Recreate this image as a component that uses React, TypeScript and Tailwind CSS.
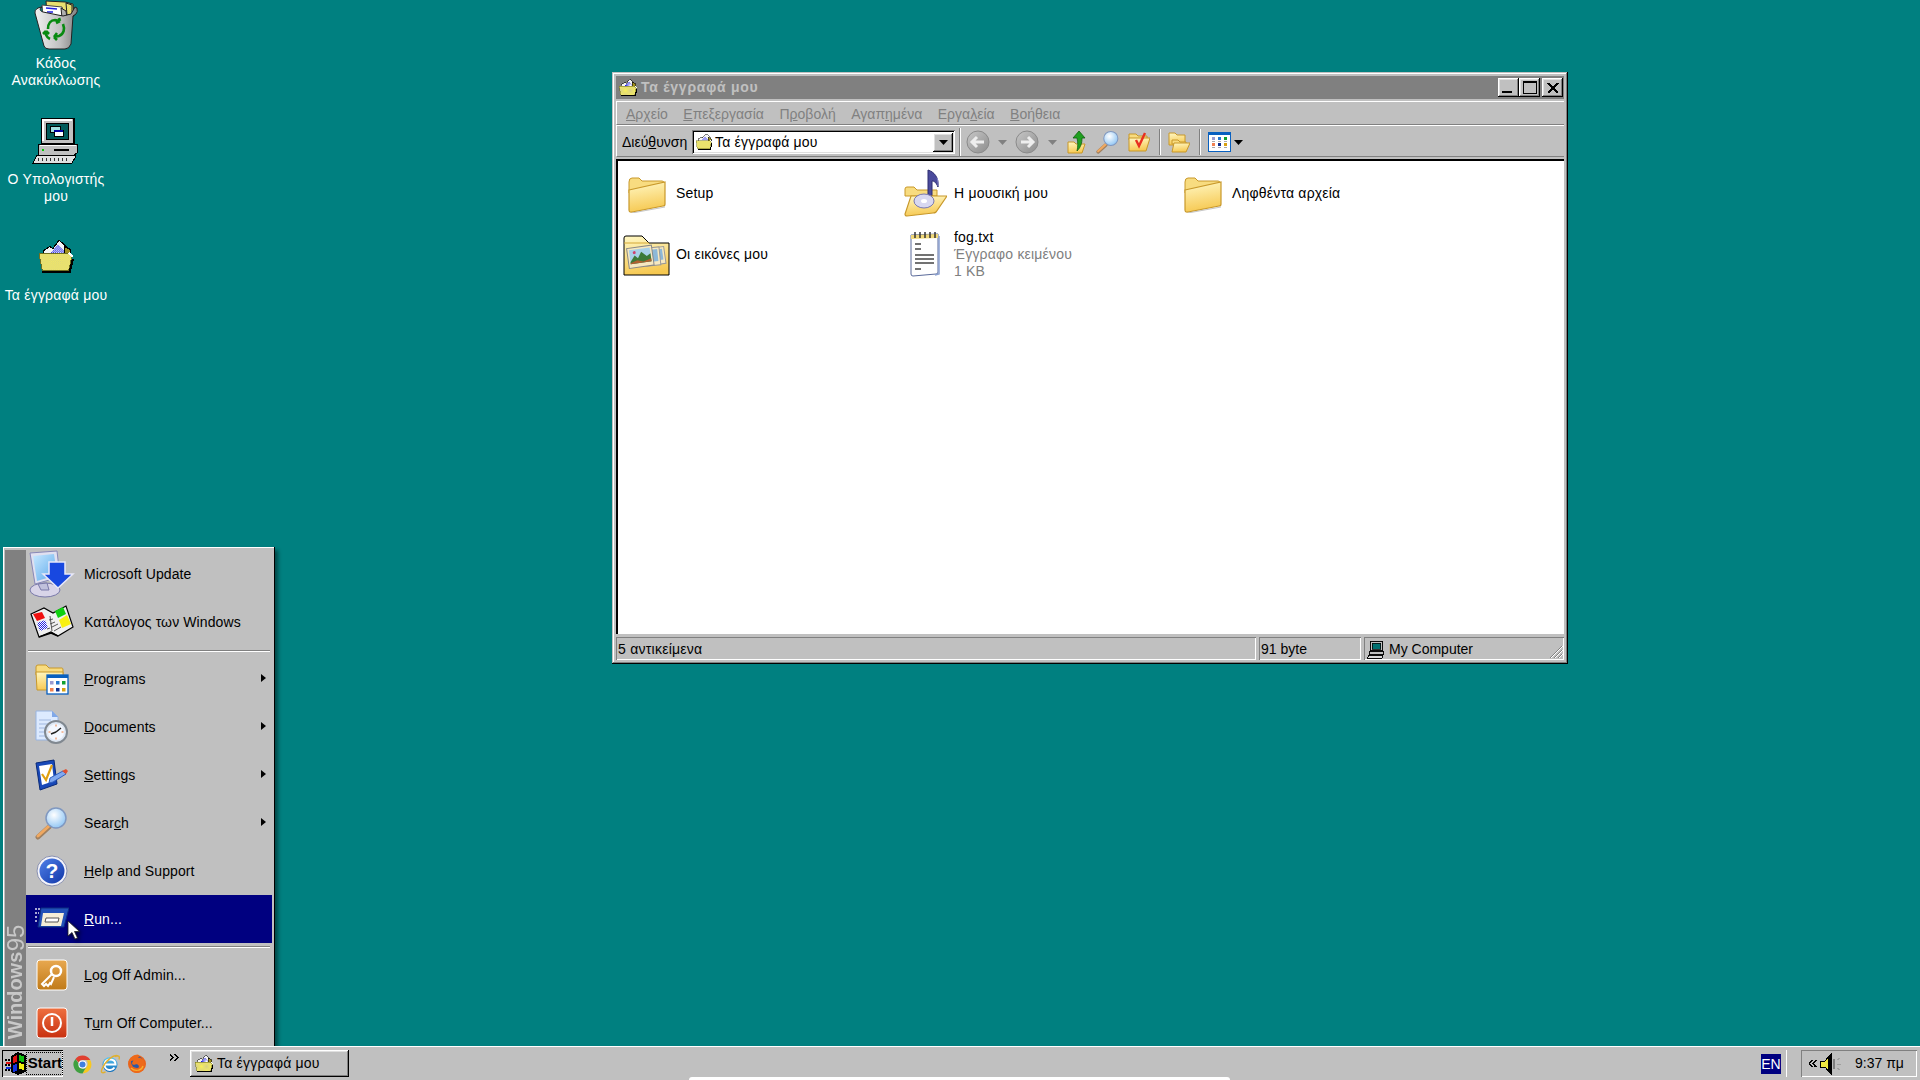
import React from "react";

const raised = "shadow-[inset_-1px_-1px_0_#000,inset_1px_1px_0_#fff,inset_-2px_-2px_0_#808080,inset_2px_2px_0_#dfdfdf]";
const sunkenThin = "shadow-[inset_1px_1px_0_#808080,inset_-1px_-1px_0_#fff]";
const sunkenDeep = "shadow-[inset_1px_1px_0_#808080,inset_-1px_-1px_0_#fff,inset_2px_2px_0_#000,inset_-2px_-2px_0_#dfdfdf]";

type P = { s?: number; w?: number; h?: number };

const Defs = () => (
  <svg className="absolute w-0 h-0" aria-hidden="true">
    <defs>
      <linearGradient id="fold" x1="0.2" y1="0" x2="0.4" y2="1">
        <stop offset="0" stopColor="#fff6c0" />
        <stop offset="1" stopColor="#f6c850" />
      </linearGradient>
      <linearGradient id="blueBtn" x1="0" y1="0" x2="1" y2="1">
        <stop offset="0" stopColor="#4f80e8" />
        <stop offset="1" stopColor="#1036a8" />
      </linearGradient>
      <linearGradient id="orange" x1="0" y1="0" x2="0" y2="1">
        <stop offset="0" stopColor="#e8a850" />
        <stop offset="1" stopColor="#c07a18" />
      </linearGradient>
      <linearGradient id="red" x1="0" y1="0" x2="0" y2="1">
        <stop offset="0" stopColor="#ee7040" />
        <stop offset="1" stopColor="#c83010" />
      </linearGradient>
      <linearGradient id="grayBall" x1="0" y1="0" x2="1" y2="1">
        <stop offset="0" stopColor="#c8c8c8" />
        <stop offset="1" stopColor="#8c8c8c" />
      </linearGradient>
      <linearGradient id="binG" x1="0" y1="0" x2="1" y2="0">
        <stop offset="0" stopColor="#f2f2f2" />
        <stop offset="0.6" stopColor="#c0c0c0" />
        <stop offset="1" stopColor="#808080" />
      </linearGradient>
      <radialGradient id="glass" cx="0.4" cy="0.35" r="0.7">
        <stop offset="0" stopColor="#ffffff" />
        <stop offset="1" stopColor="#8cc4f4" />
      </radialGradient>
      <linearGradient id="screen" x1="0" y1="0" x2="1" y2="1">
        <stop offset="0" stopColor="#c8e8ff" />
        <stop offset="1" stopColor="#5aa8ea" />
      </linearGradient>
      <linearGradient id="ieG" x1="0" y1="0" x2="0" y2="1">
        <stop offset="0" stopColor="#60c8f4" />
        <stop offset="1" stopColor="#0868b8" />
      </linearGradient>
      <pattern id="dith" width="2" height="2" patternUnits="userSpaceOnUse">
        <rect width="2" height="2" fill="#f8f058" />
        <rect width="1" height="1" fill="#d8d088" />
        <rect x="1" y="1" width="1" height="1" fill="#d8d088" />
      </pattern>
      <pattern id="dithB" width="2" height="2" patternUnits="userSpaceOnUse">
        <rect width="2" height="2" fill="#ffffff" />
        <rect width="1" height="1" fill="#2020e0" />
        <rect x="1" y="1" width="1" height="1" fill="#2020e0" />
      </pattern>
    </defs>
  </svg>
);

const Folder = ({ s = 40 }: P) => (
  <svg width={s} height={s} viewBox="0 0 40 40">
    <path d="M2 9q0-4 3-4h7l3 3h20q2 0 2 2v4L2 20z" fill="#f8dc80" stroke="#c8982a" />
    <path d="M2 17L38 9V31Q38 33 36 33L5 39Q2 39.500 2 37z" fill="url(#fold)" stroke="#c8982a" strokeWidth="1.200" />
    <path d="M5 40L38 34" stroke="#a0a0a0" strokeWidth="1" opacity=".6" />
  </svg>
);

const MusicFolder = () => (
  <svg width={44} height={48} viewBox="0 0 44 48">
    <path d="M2 20q0-2 2-2h7l3 3h20v6H2z" fill="#f8dc80" stroke="#c8982a" />
    <path d="M25 28V1C31 3 36 8 35 18C33 13 31 12 29 12V31z" fill="#4a4a9c" stroke="#2c2c70" />
    <path d="M34 9c1 3 1 5 1 8" stroke="#8080c8" fill="none" />
    <path d="M8 27h36L33 43Q32 44 30 44L4 47Q2 47 2 45z" fill="url(#fold)" stroke="#c8982a" strokeWidth="1.200" />
    <ellipse cx="21" cy="32" rx="10" ry="7" fill="#d8d8f0" stroke="#7878b0" />
    <ellipse cx="21" cy="32" rx="3" ry="2" fill="#fff" />
  </svg>
);

const PicturesFolder = () => (
  <svg width={48} height={44} viewBox="0 0 48 44">
    <path d="M1 10V6q0-2 2-2h16l7 7h20v32H1z" fill="url(#fold)" stroke="#000" strokeWidth="1" />
    <path d="M1 11h25" stroke="#d4a838" />
    <g transform="rotate(-8 16 26)">
      <rect x="26" y="18" width="16" height="17" fill="#f6e8c0" stroke="#999" />
      <rect x="28" y="20" width="12" height="11" fill="#8cb8d8" />
    </g>
    <g transform="rotate(-6 16 26)">
      <rect x="22" y="17" width="15" height="18" fill="#f6e8c0" stroke="#999" />
      <rect x="24" y="19" width="11" height="12" fill="#8cb8d8" />
    </g>
    <g transform="rotate(-8 16 26)">
      <rect x="5" y="15" width="25" height="20" fill="#f6e8c0" stroke="#888" />
      <rect x="7" y="17" width="21" height="14" fill="#a8d0e8" />
      <path d="M7 29l5-6 3 3 4-6 5 5 4-2v8H7z" fill="#3c7a38" />
      <path d="M7 30l7-2 6 2 8-2v3H7z" fill="#b06030" />
      <circle cx="12" cy="20" r="1.500" fill="#d04070" />
    </g>
  </svg>
);

const TextFile = () => (
  <svg width={32} height={46} viewBox="0 0 32 46">
    <path d="M2 4L29 3V41Q29 43 27 43L4 45Q2 45 2 43z" fill="#fff" stroke="#5a6a9a" />
    <path d="M26 44L30 43V5" fill="none" stroke="#8aa0d0" strokeWidth="1.500" />
    <path d="M2 4l27-1v4L2 8z" fill="#f0d878" />
    <path d="M6 1v6M11 1v6M16 1v6M21 1v6M26 1v6" stroke="#333" strokeWidth="1.500" />
    <path d="M6 13h6M6 18h6M6 24h19M6 28h19M6 32h19M6 38h6" stroke="#444" strokeWidth="1.300" />
  </svg>
);

const MyDocs = ({ s = 36 }: P) => (
  <svg width={s} height={s} viewBox="0 0 36 36" shapeRendering="crispEdges">
    <path d="M6 12l6-4 3 2 6-8 11 10v4H6z" fill="#f4f4f4" stroke="#000" />
    <path d="M13 14l7-8 7 8z" fill="url(#dithB)" />
    <path d="M26 8l6 3v5h-6z" fill="#a09020" stroke="#000" />
    <path d="M2 15H30L33 18L30 31H5z" fill="url(#dith)" stroke="#707020" />
    <path d="M5 32H31L34 20" fill="none" stroke="#000" strokeWidth="2" />
    <path d="M30 14l4 4" stroke="#fff" strokeWidth="2" />
  </svg>
);

const Recycle = () => (
  <svg width={46} height={50} viewBox="0 0 46 50">
    <path d="M13 1l19 1 8 2 1 12H14z" fill="#e8e070" stroke="#222" />
    <path d="M33 3l6 2v10h-5z" fill="url(#dith)" stroke="#222" />
    <path d="M9 5l20 2 3 10H10z" fill="#fff" stroke="#444" />
    <path d="M13 8l11 1M14 12l6 0 M20 16h10" stroke="#2020e0" strokeWidth="1.500" />
    <path d="M28 8l5 3 1 7h-5z" fill="#b0b0b0" stroke="#222" />
    <path d="M2 13q-1-3 3-5l4-1c-3 2-2 4 1 5l20 4 8-2 4-7 2 1q1 4-1 6l-3 2-2 28q-2 5-6 5h-16q-4 0-5-3z" fill="url(#binG)" stroke="#222" />
    <path d="M15 29c0-6 3-9 7-9l5 1M27 21l-1-3M27 21l-4 2" fill="none" stroke="#088a10" strokeWidth="2.600" />
    <path d="M30 24c2 5 1 10-4 12l-5 1M21 37l3 3M21 37l3-4" fill="none" stroke="#088a10" strokeWidth="2.600" />
    <path d="M17 39c-4-2-5-6-4-8M13 31l-3 3M13 31l3 3" fill="none" stroke="#088a10" strokeWidth="2.600" />
  </svg>
);

const Computer = () => (
  <svg width={48} height={48} viewBox="0 0 48 48" shapeRendering="crispEdges">
    <path d="M9 1H42V26H9z" fill="#c0c0c0" stroke="#000" />
    <path d="M10 2H40V4H12V24H10z" fill="#fff" />
    <path d="M41 1h2v25h-2z" fill="#000" />
    <path d="M14 6H36V22H14z" fill="#005a5a" stroke="#000" />
    <path d="M18 9H28V15H18z" fill="#a0e0e0" stroke="#000" />
    <path d="M22 13H31V19H22z" fill="#fff" stroke="#000" />
    <path d="M22 13H31V15H22z" fill="#0000a0" />
    <path d="M7 27H45V36L42 38H6V29z" fill="#c0c0c0" stroke="#000" />
    <path d="M8 28H44" stroke="#fff" />
    <circle cx="11" cy="33" r="1.500" fill="#00d000" />
    <path d="M22 32H37V34H22z" fill="#000" />
    <path d="M5 38H40L44 39 40 46H1z" fill="#e0e0e0" stroke="#000" />
    <path d="M7 41l-1 3M11 41l-1 3M15 41l-1 3M19 41l-1 3M23 41l-1 3M27 41l-1 3M31 41l-1 3M35 41l-1 3" stroke="#303030" />
  </svg>
);

const MSUpdate = () => (
  <svg width={46} height={48} viewBox="0 0 46 48">
    <ellipse cx="16" cy="40" rx="15" ry="7" fill="#d8d4e8" stroke="#7878a8" />
    <path d="M9 34l9-1 2 7H12z" fill="#c0c0dc" stroke="#7878a8" />
    <path d="M1 3L28 1 31 27 6 34z" fill="#e0e0f0" stroke="#8888b8" />
    <path d="M4 6L25 4 28 25 8 31z" fill="url(#screen)" />
    <path d="M20 12H36V24H44L29 38 14 24H20z" fill="#1848e0" stroke="#e8e8f8" strokeWidth="1.500" />
  </svg>
);

const Book = () => (
  <svg width={44} height={34} viewBox="0 0 44 34">
    <path d="M1 9L14 3 23 8 36 1 43 22 28 31 21 27 9 32z" fill="#f0f0f0" stroke="#000" strokeWidth="1.200" />
    <path d="M3 9l9-2 3 6-8 3z" fill="#f01010" />
    <path d="M7 18l8-3 3 8-8 3z" fill="url(#dithB)" />
    <path d="M25 6l8-4 3 7-8 4z" fill="#10d010" />
    <path d="M29 15l8-5 4 9-9 4z" fill="#f8f010" />
    <path d="M20 11l2 15M19 15l4-1M20 19l5-2M17 24l3-1M22 22l6-3M24 26l7-4" stroke="#444" strokeWidth=".9" />
    <path d="M9 32l12-4 7 3" fill="none" stroke="#000" strokeWidth="1.500" />
  </svg>
);

const Programs = () => (
  <svg width={34} height={32} viewBox="0 0 34 32">
    <path d="M1 4q0-2 2-2h8l3 3h13q1 0 1 2v5H1z" fill="#f8dc80" stroke="#c8982a" />
    <path d="M1 9H28V27H2z" fill="url(#fold)" stroke="#c8982a" />
    <rect x="12" y="12" width="21" height="19" fill="#fff" stroke="#0860c0" strokeWidth="1.300" />
    <rect x="12" y="12" width="21" height="3" fill="#0860c0" />
    <rect x="15" y="18" width="3.500" height="3.500" fill="#9a9ad0" />
    <rect x="21" y="18" width="3.500" height="3.500" fill="#2878d0" />
    <rect x="27" y="18" width="3.500" height="3.500" fill="#10a030" />
    <rect x="15" y="25" width="3.500" height="3.500" fill="#f08050" />
    <rect x="21" y="25" width="3.500" height="3.500" fill="#103090" />
    <rect x="27" y="25" width="3.500" height="3.500" fill="#d8a010" />
  </svg>
);

const Documents = () => (
  <svg width={34} height={34} viewBox="0 0 34 34">
    <path d="M1 1H17L23 7V30H1z" fill="#dceaff" stroke="#98b4e0" />
    <path d="M17 1v6h6z" fill="#80a8e8" />
    <path d="M4 10h12M4 14h10M4 18h9M4 22h8M4 26h9" stroke="#a0b8e0" />
    <circle cx="21" cy="22" r="11" fill="#dfe8f4" stroke="#808890" strokeWidth="2" />
    <circle cx="21" cy="22" r="8" fill="#f4f8ff" />
    <path d="M21 22l5-4M21 22l-5 2" stroke="#222" strokeWidth="1.500" />
    <path d="M21 14.500v2M21 27.500v2M13.500 22h2M26.500 22h2" stroke="#f08040" />
  </svg>
);

const Settings = () => (
  <svg width={34} height={32} viewBox="0 0 34 32">
    <path d="M1 4L19 1 22 25 5 31z" fill="#1848b8" stroke="#0a2a78" />
    <path d="M4 7L17 5 19 22 7 26z" fill="#fff" />
    <path d="M7 15l4 6 6-15" fill="none" stroke="#e0a010" strokeWidth="2.200" />
    <path d="M15 19L28 12 31 15 18 23 14 24z" fill="#80a8f0" stroke="#3060c0" />
    <path d="M27 12l4-2 2 2-2 3z" fill="#e05030" />
  </svg>
);

const Search = ({ s = 34 }: P) => (
  <svg width={s} height={s} viewBox="0 0 34 34">
    <path d="M14 21L3 31" stroke="#a08060" strokeWidth="5" strokeLinecap="round" />
    <path d="M14 20L3 30" stroke="#f0a860" strokeWidth="3" strokeLinecap="round" />
    <circle cx="21" cy="12" r="10" fill="url(#glass)" stroke="#8098c0" strokeWidth="1.500" />
  </svg>
);

const Help = () => (
  <svg width={32} height={32} viewBox="0 0 32 32">
    <circle cx="16" cy="16" r="15" fill="#f4f4fa" stroke="#8890b0" />
    <circle cx="16" cy="16" r="12.500" fill="url(#blueBtn)" />
    <text x="16" y="23" textAnchor="middle" fontFamily="Liberation Sans" fontWeight="700" fontSize="21" fill="#fff">?</text>
  </svg>
);

const RunIcon = () => (
  <svg width={34} height={24} viewBox="0 0 34 24">
    <path d="M6 1h25l3 0-5 19H3z" fill="#2050b8" stroke="#0c2c80" />
    <path d="M8 6H29L26 19H6z" fill="#f4eed8" />
    <path d="M11 11H24L23 15H10z" fill="#fff" stroke="#555" />
    <path d="M0 2h5M0 6h4M0 10h3M0 14h2" stroke="#e0e0f0" strokeWidth="1.500" strokeDasharray="2 1" />
  </svg>
);

const KeyIcon = () => (
  <svg width={32} height={32} viewBox="0 0 32 32">
    <rect x="1" y="1" width="30" height="30" rx="3" fill="url(#orange)" stroke="#fff" />
    <circle cx="20" cy="12" r="5" fill="none" stroke="#fff" strokeWidth="2.500" />
    <path d="M16 15L6 25l2 2 2-2 2 2 2-3 1 1 3-7" fill="none" stroke="#fff" strokeWidth="2" />
  </svg>
);

const PowerIcon = () => (
  <svg width={32} height={32} viewBox="0 0 32 32">
    <rect x="1" y="1" width="30" height="30" rx="3" fill="url(#red)" stroke="#fff" />
    <circle cx="16" cy="16" r="9" fill="none" stroke="#fff" strokeWidth="2" />
    <path d="M16 10v9" stroke="#fff" strokeWidth="2.500" />
  </svg>
);

const Flag = () => (
  <svg width={21} height={24} viewBox="0 0 21 24" shapeRendering="crispEdges">
    <path d="M6 4L13 0L21 3V20L13 23L6 20z" fill="#000" />
    <path d="M8 5l4-2v7l-4 1z" fill="#e01010" />
    <path d="M14 3l5 1v6l-5-1z" fill="#10c010" />
    <path d="M8 13l4-1v7l-4 1z" fill="#1030e0" />
    <path d="M14 11l5 1v6l-5-1z" fill="#f0f010" />
    <path d="M0 8h6M0 13h6M0 18h6" stroke="#000" strokeWidth="2" strokeDasharray="2 1" />
    <path d="M1 11h5" stroke="#e01010" strokeWidth="2" />
    <path d="M1 16h5" stroke="#1030e0" strokeWidth="2" />
  </svg>
);

const Chrome = () => (
  <svg width={19} height={19} viewBox="0 0 18 18">
    <path d="M9 0.500a8.500 8.500 0 0 1 7.400 4.300H9a4.200 4.200 0 0 0-3.700 2.200L2.300 3.700A8.500 8.500 0 0 1 9 0.500z" fill="#e04030" />
    <path d="M16.500 5A8.500 8.500 0 0 1 9 17.500l3.500-6a4.200 4.200 0 0 0 0-6.500z" fill="#f8c820" />
    <path d="M2.300 3.700A8.500 8.500 0 0 0 9 17.500l3.200-5.500a4.200 4.200 0 0 1-6.700-4z" fill="#40a040" />
    <circle cx="9" cy="9" r="3.400" fill="#4080e0" stroke="#fff" />
  </svg>
);

const IE = () => (
  <svg width={20} height={20} viewBox="0 0 20 20">
    <circle cx="10" cy="10.500" r="7.500" fill="url(#ieG)" />
    <path d="M4.500 10.500h11c0-3-2-5-5.500-5s-5.500 2.500-5.500 5c0 3 2 5.500 5.500 5.500 2 0 3.500-1 4.500-2.500" fill="none" stroke="#fff" strokeWidth="2" />
    <path d="M18 2C14 0 6 6 2 15c-1.500 3.500 0 4.500 3.500 3M15 2.500c3.500-1.500 5-.5 4 3" fill="none" stroke="#e0b030" strokeWidth="1.400" />
  </svg>
);

const Firefox = () => (
  <svg width={20} height={20} viewBox="0 0 20 20">
    <circle cx="10" cy="10" r="9" fill="#e8641c" />
    <circle cx="10" cy="8" r="6" fill="#2a5aa8" />
    <path d="M1.500 9c0-4 4-8.500 9.500-8.500 2 1 1 2 0 3.500 3-1 6.500 2 6.500 5.500 1 5-3 9.500-7.500 9.500-3 0-5.500-1-7.500-4.500 2 2 5 2 7 1 3-1 3-4 1-5-1-1-3 1-5 0-1-1 0-3 1-4-2 0-4 1-5.500 2.500z" fill="#ee6a1a" />
    <path d="M4 14c2 2 5 3 8 2 2-.5 3.500-2 4-4" stroke="#f8b030" strokeWidth="1.300" fill="none" />
  </svg>
);

const Speaker = () => (
  <svg width={22} height={24} viewBox="0 0 22 24" shapeRendering="crispEdges">
    <path d="M0 9h5l6-7v20l-6-7H0z" fill="#f0e840" stroke="#000" />
    <path d="M8 6L12 1V23L8 18z" fill="#000" />
    <path d="M14 7v10" stroke="#808080" strokeWidth="2" />
    <path d="M17 8l3-2M17 12h4M17 16l3 2" stroke="#a0a0a0" />
  </svg>
);

const Ball = ({ dir }: { dir: "l" | "r" }) => (
  <svg width={24} height={24} viewBox="0 0 24 24">
    <circle cx="12" cy="12" r="11" fill="url(#grayBall)" stroke="#8a8a8a" />
    <path d={dir === "l" ? "M18 12H7M11 7l-5 5 5 5" : "M6 12H17M13 7l5 5-5 5"} fill="none" stroke="#eeeeee" strokeWidth="3" />
  </svg>
);

const Drop = ({ c = "#808080" }: { c?: string }) => (
  <svg width={9} height={5} viewBox="0 0 9 5"><path d="M0 0h9L4.500 5z" fill={c} /></svg>
);

const UpIcon = () => (
  <svg width={20} height={24} viewBox="0 0 20 24">
    <path d="M1 12h6l2 2h9l-3 9H1z" fill="url(#fold)" stroke="#c8982a" />
    <path d="M6 8l6-7 6 7h-3c0 5-1 9-5 13 1-4 1-9 0-13z" fill="#20a020" stroke="#106010" strokeWidth=".8" />
  </svg>
);

const FavIcon = () => (
  <svg width={22} height={22} viewBox="0 0 22 22">
    <path d="M1 3h7l2 2h9v4H1z" fill="#f8dc80" stroke="#c8982a" />
    <path d="M1 7h21l-4 13H1z" fill="url(#fold)" stroke="#c8982a" />
    <path d="M8 9l3 6 6-13" fill="none" stroke="#e83020" strokeWidth="2.400" />
  </svg>
);

const FoldersIcon = () => (
  <svg width={22} height={22} viewBox="0 0 22 22">
    <path d="M1 2h6l2 2h8v10H1z" fill="url(#fold)" stroke="#c8982a" />
    <path d="M4 9h6l2 2h6v2H4z" fill="#f8dc80" stroke="#c8982a" />
    <path d="M6 12h16l-4 9H4z" fill="url(#fold)" stroke="#c8982a" />
  </svg>
);

const Views = () => (
  <svg width={23} height={20} viewBox="0 0 23 20" shapeRendering="crispEdges">
    <rect x=".5" y=".5" width="22" height="19" fill="#fff" stroke="#0860c0" />
    <rect x="0" y="0" width="23" height="3" fill="#0860c0" />
    <rect x="4" y="5" width="3" height="3" fill="#9a9ad0" />
    <rect x="10" y="5" width="3" height="3" fill="#2878d0" />
    <rect x="16" y="5" width="3" height="3" fill="#10a030" />
    <rect x="4" y="11" width="3" height="3" fill="#f08050" />
    <rect x="10" y="11" width="3" height="3" fill="#103090" />
    <rect x="16" y="11" width="3" height="3" fill="#d8a010" />
    <path d="M4 9.500h3M10 9.500h3M16 9.500h3M4 15.500h3M10 15.500h3M16 15.500h3" stroke="#aaa" />
  </svg>
);

const Grip = () => (
  <svg width={14} height={14} viewBox="0 0 14 14">
    <path d="M13 1L1 13M13 5L5 13M13 9L9 13" stroke="#808080" />
    <path d="M14 1L2 13M14 5L6 13M14 9L10 13" stroke="#fff" />
  </svg>
);

const DesktopIcon = ({ icon, lines }: { icon: React.ReactNode; lines: string[] }) => (
  <div className="flex h-[116px] w-[112px] flex-col items-center">
    <div className="flex h-[50px] items-center justify-center">{icon}</div>
    <div className="mt-[5px] text-center text-[14px] leading-[17px] tracking-[0.2px] text-white whitespace-nowrap">
      {lines.map((l) => <div key={l}>{l}</div>)}
    </div>
  </div>
);

const MenuItem = ({ icon, children, arrow, active }: { icon: React.ReactNode; children: React.ReactNode; arrow?: boolean; active?: boolean }) => (
  <div className={`flex h-[48px] items-center text-[14px] tracking-[0.1px] ${active ? "bg-[#000080] text-white" : "text-black"}`}>
    <div className="mr-[6px] flex w-[52px] justify-center">{icon}</div>
    <span className="flex-1">{children}</span>
    {arrow && (
      <svg width={5} height={8} viewBox="0 0 5 8" className="mb-[2px] mr-[6px]"><path d="M0 0l5 4-5 4z" fill="#000" /></svg>
    )}
  </div>
);

const Sep = ({ h }: { h: number }) => (
  <div className="flex items-center pl-[2px] pr-[2px]" style={{ height: h }}>
    <div className="h-[2px] w-full border-t border-t-[#808080] border-b border-b-white" />
  </div>
);

const StartMenu = () => (
  <div className="absolute bottom-[30px] left-[3px] z-20 flex h-[503px] w-[272px] bg-[#c0c0c0] pb-[3px] pl-[2px] pr-[3px] pt-[3px] shadow-[inset_-1px_-1px_0_#000,inset_1px_1px_0_#fff,3px_3px_4px_rgba(0,0,0,0.45)]">
    <div className="flex w-[21px] flex-col items-center justify-end bg-[#808080] pb-[8px]">
      <div className="flex rotate-180 items-center text-[#c8c8c8] [writing-mode:vertical-rl]">
        <span className="text-[20px] font-bold leading-[21px]">Windows</span>
        <span className="text-[24px] leading-[21px]">95</span>
      </div>
    </div>
    <div className="flex flex-1 flex-col">
      <MenuItem icon={<MSUpdate />}>Microsoft Update</MenuItem>
      <MenuItem icon={<Book />}>Κατάλογος των Windows</MenuItem>
      <Sep h={9} />
      <MenuItem icon={<Programs />} arrow><u>P</u>rograms</MenuItem>
      <MenuItem icon={<Documents />} arrow><u>D</u>ocuments</MenuItem>
      <MenuItem icon={<Settings />} arrow><u>S</u>ettings</MenuItem>
      <MenuItem icon={<Search />} arrow>Sear<u>c</u>h</MenuItem>
      <MenuItem icon={<Help />}><u>H</u>elp and Support</MenuItem>
      <MenuItem icon={<RunIcon />} active><u>R</u>un...</MenuItem>
      <Sep h={8} />
      <MenuItem icon={<KeyIcon />}><u>L</u>og Off Admin...</MenuItem>
      <MenuItem icon={<PowerIcon />}>T<u>u</u>rn Off Computer...</MenuItem>
    </div>
  </div>
);

const WinBtn = ({ children, cls = "" }: { children: React.ReactNode; cls?: string }) => (
  <div className={`flex h-[19px] w-[21px] items-center justify-center bg-[#c0c0c0] ${raised} ${cls}`}>{children}</div>
);

const FileItem = ({ icon, children }: { icon: React.ReactNode; children: React.ReactNode }) => (
  <div className="flex items-center text-[14px] tracking-[0.2px] text-black">
    <div className="flex w-[58px] shrink-0 items-center justify-center">{icon}</div>
    <div className="leading-[17px]">{children}</div>
  </div>
);

const Explorer = () => (
  <div className="absolute left-[612px] top-[72px] z-10 flex h-[592px] w-[956px] flex-col bg-[#c0c0c0] p-[4px] shadow-[inset_-1px_-1px_0_#000,inset_1px_1px_0_#c0c0c0,inset_-2px_-2px_0_#808080,inset_2px_2px_0_#fff]">
    <div className="flex h-[23px] shrink-0 items-center bg-[#808080] pl-[2px] pr-[1px]">
      <MyDocs s={20} />
      <span className="ml-[3px] flex-1 text-[14px] font-bold tracking-[0.75px] text-[#c0c0c0]">Τα έγγραφά μου</span>
      <WinBtn>
        <div className="mt-[8px] mr-[3px] h-[2px] w-[10px] bg-black" />
      </WinBtn>
      <WinBtn>
        <div className="h-[13px] w-[14px] border border-t-2 border-black" />
      </WinBtn>
      <WinBtn cls="ml-[2px]">
        <svg width={12} height={10} viewBox="0 0 12 10" shapeRendering="crispEdges"><path d="M1 0L11 10M11 0L1 10" stroke="#000" strokeWidth="2.200" /></svg>
      </WinBtn>
    </div>

    <div className="mt-[2px] flex h-[24px] shrink-0 items-center gap-[15.5px] border-t border-l border-t-white border-l-white border-b border-b-[#808080] pl-[9px] pt-[2px] text-[14px] text-[#808080]">
      <span><u>Α</u>ρχείο</span>
      <span><u>Ε</u>πεξεργασία</span>
      <span>Π<u>ρ</u>οβολή</span>
      <span>Αγαπ<u>η</u>μένα</span>
      <span>Εργα<u>λ</u>εία</span>
      <span><u>Β</u>οήθεια</span>
    </div>

    <div className="flex h-[32px] shrink-0 items-center border-t border-t-white border-l border-l-white border-b border-b-[#808080] pl-[5px] pt-[2px] text-[14px] text-black">
      <span className="w-[70px]">Διεύ<u>θ</u>υνση</span>
      <div className={`flex h-[24px] w-[263px] items-center bg-white pl-[3px] pr-[2px] ${sunkenDeep}`}>
        <MyDocs s={18} />
        <span className="ml-[2px] flex-1 tracking-[0.2px]">Τα έγγραφά μου</span>
        <div className={`flex h-[19px] w-[20px] items-center justify-center bg-[#c0c0c0] ${raised}`}><Drop c="#000" /></div>
      </div>
      <div className="ml-[4px] h-[28px] w-[2px] border-l border-l-[#808080] border-r border-r-white" />
      <div className="ml-[5px]"><Ball dir="l" /></div>
      <div className="ml-[8px]"><Drop /></div>
      <div className="ml-[8px]"><Ball dir="r" /></div>
      <div className="ml-[9px]"><Drop /></div>
      <div className="ml-[10px]"><UpIcon /></div>
      <div className="ml-[9px]"><Search s={24} /></div>
      <div className="ml-[8px]"><FavIcon /></div>
      <div className="ml-[9px] h-[26px] w-[2px] border-l border-l-[#808080] border-r border-r-white" />
      <div className="ml-[7px]"><FoldersIcon /></div>
      <div className="ml-[9px] h-[26px] w-[2px] border-l border-l-[#808080] border-r border-r-white" />
      <div className="ml-[7px]"><Views /></div>
      <div className="ml-[3px]"><Drop c="#000" /></div>
    </div>

    <div className="mt-[2px] min-h-0 flex-1 border-t-2 border-l-2 border-t-black border-l-black bg-white">
      <div className="grid grid-cols-[278px_278px_278px] grid-rows-[64px_58px]">
        <FileItem icon={<Folder />}>Setup</FileItem>
        <FileItem icon={<MusicFolder />}>Η μουσική μου</FileItem>
        <FileItem icon={<Folder />}>Ληφθέντα αρχεία</FileItem>
        <FileItem icon={<PicturesFolder />}>Οι εικόνες μου</FileItem>
        <FileItem icon={<TextFile />}>
          <div>fog.txt</div>
          <div className="text-[#808080]">Έγγραφο κειμένου</div>
          <div className="text-[#808080]">1 KB</div>
        </FileItem>
      </div>
    </div>

    <div className="mt-[3px] flex h-[23px] shrink-0 gap-[3px] pt-0 text-[14px] text-black">
      <div className={`flex w-[640px] items-center pl-[2px] pt-[2px] tracking-[0.25px] ${sunkenThin}`}>5 αντικείμενα</div>
      <div className={`flex w-[102px] items-center pl-[2px] pt-[2px] ${sunkenThin}`}>91 byte</div>
      <div className={`relative flex flex-1 items-center pl-[3px] pt-[2px] ${sunkenThin}`}>
        <svg width={18} height={18} viewBox="0 0 48 48" shapeRendering="crispEdges"><path d="M9 1H42V26H9z" fill="#c0c0c0" stroke="#000" strokeWidth="2.500" /><path d="M14 6H36V22H14z" fill="#007070" stroke="#000" strokeWidth="2" /><path d="M7 27H45V36H6z" fill="#c0c0c0" stroke="#000" strokeWidth="2.500" /><path d="M5 38H42L40 46H1z" fill="#d8d8d8" stroke="#000" strokeWidth="2.500" /></svg>
        <span className="ml-[4px]">My Computer</span>
        <div className="absolute bottom-[1px] right-[1px]"><Grip /></div>
      </div>
    </div>
  </div>
);

const Taskbar = () => (
  <div className="relative z-30 flex h-[34px] shrink-0 items-start border-t border-t-white bg-[#c0c0c0] pt-[3px] text-[14px] text-black">
    <div className="ml-[2px] flex h-[27px] w-[61px] items-center pl-[3px] shadow-[inset_1px_1px_0_#000,inset_-1px_-1px_0_#fff]">
      <Flag />
      <div className="flex h-[23px] flex-1 items-center border border-dotted border-black pl-[1px] text-[15px] font-bold">Start</div>
    </div>
    <div className="ml-[10px] mt-[4px] flex items-center">
      <Chrome />
      <div className="ml-[8px]"><IE /></div>
      <div className="ml-[7px]"><Firefox /></div>
    </div>
    <svg width={9} height={7} viewBox="0 0 9 7" className="ml-[23px] mt-[4px]" shapeRendering="crispEdges"><path d="M0 0l3 3.500L0 7M5 0l3 3.500L5 7" fill="none" stroke="#000" strokeWidth="1.600" /></svg>
    <div className={`ml-[11px] flex h-[27px] w-[159px] items-center pl-[4px] ${raised}`}>
      <MyDocs s={20} />
      <span className="ml-[3px] tracking-[0.2px]">Τα έγγραφά μου</span>
    </div>
    <div className="flex-1" />
    <div className="mt-[4px] flex h-[20px] w-[20px] items-center justify-center bg-[#000080] text-[14px] text-white">EN</div>
    <div className="ml-[5px] h-[27px] w-[1px] bg-white" />
    <div className={`ml-[14px] mr-[3px] flex h-[27px] w-[116px] items-center pl-[8px] ${sunkenThin}`}>
      <svg width={8} height={7} viewBox="0 0 8 7" shapeRendering="crispEdges"><path d="M3 0L0 3.500 3 7M7 0L4 3.500 7 7" fill="none" stroke="#000" strokeWidth="1.600" /></svg>
      <div className="ml-[3px]"><Speaker /></div>
      <span className="ml-[13px] whitespace-nowrap">9:37 πμ</span>
    </div>
    <div className="absolute bottom-0 left-[689px] h-[3px] w-[541px] rounded-t-[3px] bg-white" />
  </div>
);

const Cursor = () => (
  <svg width={16} height={22} viewBox="0 0 16 22" className="absolute left-[67px] top-[920px] z-40 drop-shadow-[2px_2px_2px_rgba(0,0,0,0.6)]">
    <path d="M1 1V16L5 12.500 8 19 10.500 18 7.500 11.500H12.500z" fill="#fff" stroke="#222" strokeWidth=".8" />
  </svg>
);

export default function App() {
  return (
    <div className="relative flex h-screen w-screen flex-col overflow-hidden bg-[#008080] font-['Liberation_Sans',Arial,sans-serif]">
      <Defs />
      <div className="relative min-h-0 flex-1">
        <div className="flex w-[112px] flex-col">
          <DesktopIcon icon={<Recycle />} lines={["Κάδος", "Ανακύκλωσης"]} />
          <DesktopIcon icon={<Computer />} lines={["Ο Υπολογιστής", "μου"]} />
          <DesktopIcon icon={<MyDocs s={38} />} lines={["Τα έγγραφά μου"]} />
        </div>
        <Explorer />
      </div>
      <StartMenu />
      <Taskbar />
      <Cursor />
    </div>
  );
}
